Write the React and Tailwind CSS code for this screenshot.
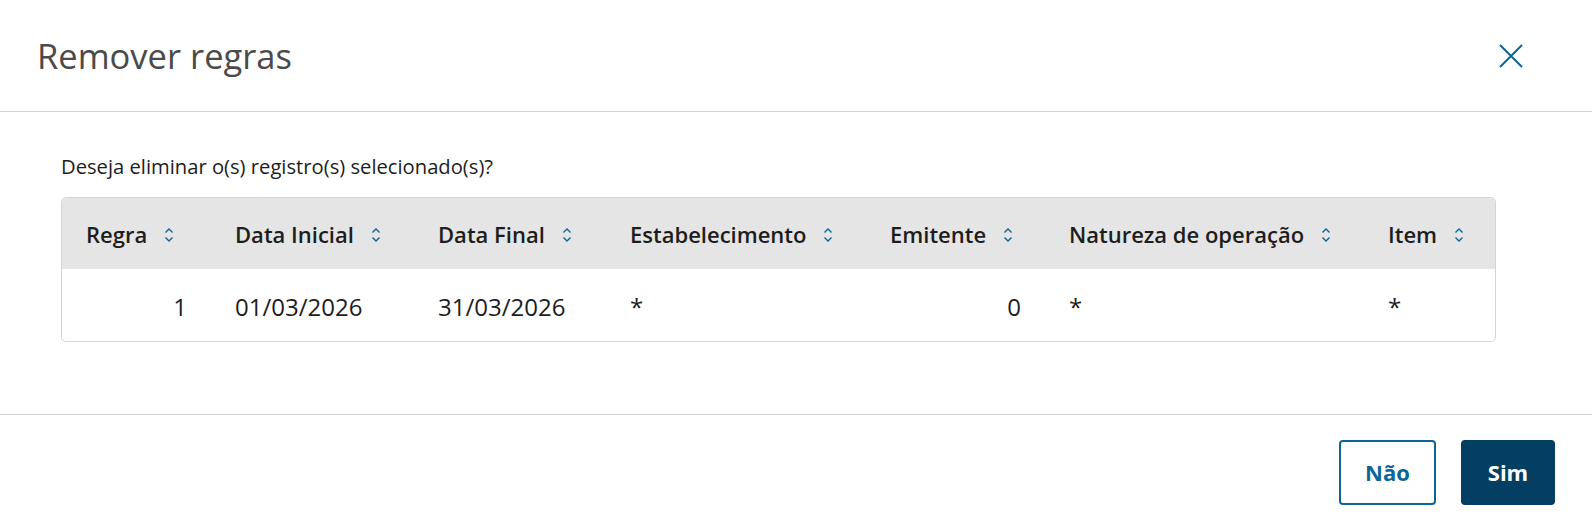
import React from "react";

const columns = [
  { key: "regra", label: "Regra", width: 149, align: "right" },
  { key: "dataInicial", label: "Data Inicial", width: 203 },
  { key: "dataFinal", label: "Data Final", width: 192 },
  { key: "estab", label: "Estabelecimento", width: 260 },
  { key: "emitente", label: "Emitente", width: 179, align: "right" },
  { key: "natureza", label: "Natureza de operação", width: 319 },
  { key: "item", label: "Item", width: 133 },
];

const rows = [
  {
    regra: "1",
    dataInicial: "01/03/2026",
    dataFinal: "31/03/2026",
    estab: "*",
    emitente: "0",
    natureza: "*",
    item: "*",
  },
];

function SortIcon() {
  return (
    <svg width="10" height="16" viewBox="0 0 10 16" fill="none" stroke="#0c6599" strokeWidth="1.4">
      <path d="M1.5 5.5 L5 2 L8.5 5.5" />
      <path d="M1.5 10.5 L5 14 L8.5 10.5" />
    </svg>
  );
}

export default function App() {
  return (
    <div
      className="w-full h-[528px] bg-white flex flex-col text-[#1d1d1d]"
      style={{ fontFamily: "'Open Sans', 'Noto Sans', sans-serif" }}
    >
      {/* header */}
      <div className="h-[112px] shrink-0 flex items-center justify-between pl-[37px] pr-[69px] border-b border-[#d2d2d2]">
        <h1 className="text-[34.5px] text-[#4a4a4a] font-normal">Remover regras</h1>
        <button className="w-6 h-6 flex items-center justify-center">
          <svg width="24" height="24" viewBox="0 0 24 24" fill="none" stroke="#0c6599" strokeWidth="2">
            <path d="M1 1 L23 23 M23 1 L1 23" />
          </svg>
        </button>
      </div>

      {/* body */}
      <div className="flex-1 pl-[61px] pr-[96px] pt-[40px]">
        <p className="text-[20.2px] leading-[28px]">Deseja eliminar o(s) registro(s) selecionado(s)?</p>
        <div className="mt-[17px] border border-[#d4d4d4] rounded-[5px] overflow-hidden">
          <table className="w-full table-fixed border-collapse">
            <colgroup>
              {columns.map((c) => (
                <col key={c.key} style={{ width: c.width }} />
              ))}
            </colgroup>
            <thead>
              <tr className="bg-[#e5e5e5] h-[71px]">
                {columns.map((c) => (
                  <th key={c.key} className="px-6 pt-[2px] text-left font-semibold text-[22px]">
                    <span className="inline-flex items-center gap-[17px]">
                      {c.label}
                      <SortIcon />
                    </span>
                  </th>
                ))}
              </tr>
            </thead>
            <tbody>
              {rows.map((r, i) => (
                <tr key={i} className="h-[72px]">
                  {columns.map((c) => (
                    <td
                      key={c.key}
                      className={`px-6 pt-[3px] text-[24px] ${c.align === "right" ? "text-right" : "text-left"}`}
                    >
                      {r[c.key]}
                    </td>
                  ))}
                </tr>
              ))}
            </tbody>
          </table>
        </div>
      </div>

      {/* footer */}
      <div className="h-[114px] shrink-0 border-t border-[#d2d2d2] flex items-start justify-end gap-[25px] pt-[25px] pr-[37px]">
        <button className="w-[97px] h-[65px] border-2 border-[#0c6599] rounded-[4px] text-[#0c6599] font-bold text-[22px]">
          Não
        </button>
        <button className="w-[94px] h-[65px] bg-[#023f62] rounded-[4px] text-white font-bold text-[22px]">
          Sim
        </button>
      </div>
    </div>
  );
}
